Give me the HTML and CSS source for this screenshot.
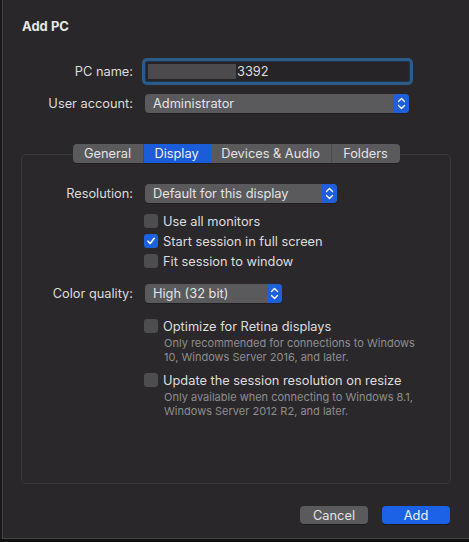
FILE: index.html
```html
<!DOCTYPE html>
<html lang="en">
<head>
    <meta charset="UTF-8">
    <title>Add PC</title>
    <link rel="stylesheet" href="styles.css">
</head>
<body>
    <div class="window">
        <h1 class="title">Add PC</h1>

        <div class="form">
            <label class="label">PC name:</label>
            <div class="field"><span class="redacted"></span><span>3392</span></div>
            <label class="label">User account:</label>
            <div class="popup popup-account">
                <span>Administrator</span>
                <span class="stepper"><svg width="9" height="13" viewBox="0 0 9 13"><path d="M1.5 4.5 L4.5 1.5 L7.5 4.5 M1.5 8.5 L4.5 11.5 L7.5 8.5" fill="none" stroke="#fff" stroke-width="1.4" stroke-linecap="round" stroke-linejoin="round"/></svg></span>
            </div>
        </div>

        <div class="tabbox">
            <div class="tabs">
                <span class="tab tab-general">General</span>
                <span class="tab tab-display active">Display</span>
                <span class="tab tab-devices">Devices &amp; Audio</span>
                <span class="tab tab-folders">Folders</span>
            </div>

            <div class="pane">
                <div class="row">
                    <label class="label">Resolution:</label>
                    <div class="popup popup-resolution">
                        <span>Default for this display</span>
                        <span class="stepper"><svg width="9" height="13" viewBox="0 0 9 13"><path d="M1.5 4.5 L4.5 1.5 L7.5 4.5 M1.5 8.5 L4.5 11.5 L7.5 8.5" fill="none" stroke="#fff" stroke-width="1.4" stroke-linecap="round" stroke-linejoin="round"/></svg></span>
                    </div>
                </div>
                <div class="checks">
                    <div class="check"><span class="box"></span>Use all monitors</div>
                    <div class="check"><span class="box checked"><svg width="10" height="10" viewBox="0 0 10 10"><path d="M2 5.2 L4.2 7.5 L8.2 2.3" fill="none" stroke="#fff" stroke-width="1.6" stroke-linecap="round" stroke-linejoin="round"/></svg></span>Start session in full screen</div>
                    <div class="check"><span class="box"></span>Fit session to window</div>
                </div>

                <div class="row row-color">
                    <label class="label">Color quality:</label>
                    <div class="popup popup-color">
                        <span>High (32 bit)</span>
                        <span class="stepper"><svg width="9" height="13" viewBox="0 0 9 13"><path d="M1.5 4.5 L4.5 1.5 L7.5 4.5 M1.5 8.5 L4.5 11.5 L7.5 8.5" fill="none" stroke="#fff" stroke-width="1.4" stroke-linecap="round" stroke-linejoin="round"/></svg></span>
                    </div>
                </div>
                <div class="checks checks-retina">
                    <div class="check"><span class="box"></span>Optimize for Retina displays</div>
                    <p class="hint">Only recommended for connections to Windows<br>10, Windows Server 2016, and later.</p>
                    <div class="check check-resize"><span class="box"></span>Update the session resolution on resize</div>
                    <p class="hint">Only available when connecting to Windows 8.1,<br>Windows Server 2012 R2, and later.</p>
                </div>
            </div>
        </div>

        <div class="buttons">
            <button class="btn">Cancel</button>
            <button class="btn btn-primary">Add</button>
        </div>
    </div>
</body>
</html>
```

FILE: styles.css
```css
body {
    margin: 0;
    background: #111;
    font-family: Inter, "Liberation Sans", sans-serif;
    font-size: 12.8px;
    color: #dedede;
}
.window {
    width: 469px;
    height: 539px;
    box-sizing: border-box;
    background: #29272a;
    border-left: 2px solid #1a191b;
    box-shadow: inset 1px -1px 0 #444245;
    padding-top: 18px;
}
.title {
    margin: 0 0 0 20px;
    font-size: 13px;
    line-height: 16px;
    font-weight: bold;
    color: #e6e6e6;
}
.form {
    display: grid;
    grid-template-columns: 131px 265px;
    column-gap: 12px;
    row-gap: 12px;
    align-items: center;
    margin-top: 27px;
}
.label {
    text-align: right;
    color: #dcdcdc;
}
.field {
    height: 21px;
    box-sizing: border-box;
    border: 1px solid #1d3550;
    box-shadow: 0 0 0 3px #2a5b89;
    border-radius: 2px;
    background: #262427;
    display: flex;
    align-items: center;
    padding-left: 2px;
}
.redacted {
    width: 88px;
    height: 15px;
    background: #4c4a4d;
    margin-right: 1px;
}
.popup {
    height: 19px;
    box-sizing: border-box;
    background: #5a595c;
    border-radius: 4px;
    display: flex;
    align-items: center;
    justify-content: space-between;
    padding-left: 8px;
    color: #e4e4e4;
    box-shadow: 0 1px 0 rgba(0, 0, 0, 0.25);
}
.popup-account {
    width: 264px;
}
.popup-resolution {
    width: 192px;
}
.popup-color {
    width: 137px;
}
.stepper {
    width: 15px;
    height: 19px;
    background: #1e5fdc;
    border-radius: 0 4px 4px 0;
    display: flex;
    align-items: center;
    justify-content: center;
}
.tabbox {
    margin: 41px 18px 0 19px;
    height: 330px;
    box-sizing: border-box;
    border: 1px solid #3a383b;
    border-radius: 5px;
    background: #2a282b;
}
.tabs {
    display: flex;
    width: 327px;
    height: 19px;
    margin: -11px auto 0;
    background: #5a595c;
    border-radius: 4px;
    overflow: hidden;
    box-shadow: 0 1px 0 rgba(0, 0, 0, 0.25);
}
.tab {
    display: flex;
    align-items: center;
    justify-content: center;
    color: #e4e4e4;
    border-right: 1px solid #4a494c;
}
.tab:last-child {
    border-right: none;
}
.tab-general {
    width: 70px;
}
.tab-display {
    width: 66px;
}
.tab-devices {
    width: 120px;
}
.tab-folders {
    flex: 1;
}
.tab.active {
    background: #1b5dd8;
    color: #f0f0f0;
    border-right-color: #1b5dd8;
}
.pane {
    padding-top: 21px;
}
.row {
    display: grid;
    grid-template-columns: 111px auto;
    column-gap: 12px;
    align-items: center;
}
.checks {
    margin: 8px 0 0 122px;
}
.check {
    display: flex;
    align-items: center;
    height: 20px;
    color: #dedede;
}
.box {
    width: 14px;
    height: 14px;
    box-sizing: border-box;
    border-radius: 3px;
    background: #4d4c4f;
    margin-right: 5px;
    display: flex;
    align-items: center;
    justify-content: center;
}
.box.checked {
    background: #1d61e0;
}
.row-color {
    margin-top: 13px;
}
.checks-retina {
    margin-top: 13px;
}
.check-resize {
    margin-top: 6px;
}
.hint {
    margin: 0 0 0 20px;
    font-size: 11px;
    line-height: 14px;
    color: #8e8d90;
}
.buttons {
    display: flex;
    justify-content: flex-end;
    gap: 14px;
    margin: 22px 19px 0 0;
}
.btn {
    width: 68px;
    height: 18px;
    border: none;
    border-radius: 4px;
    background: #5a595c;
    color: #e4e4e4;
    font-family: inherit;
    font-size: 12.8px;
    padding: 0;
    box-shadow: 0 1px 0 rgba(0, 0, 0, 0.3);
}
.btn-primary {
    background: #1b62e6;
    color: #f2f2f2;
}
```
